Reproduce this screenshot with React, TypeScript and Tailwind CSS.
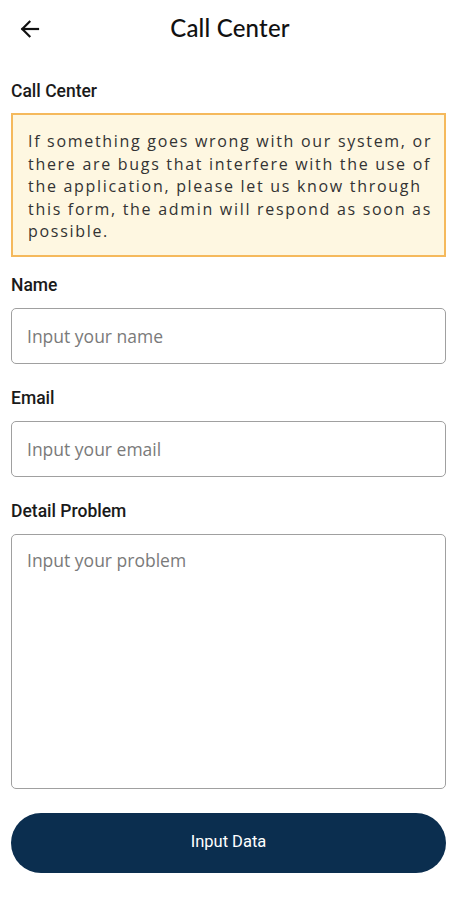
import React from "react";

export default function App() {
  return (
    <div className="w-[460px] min-h-[900px] bg-white">
      <div className="relative h-14 flex items-center justify-center">
        <button className="absolute left-[18px] top-[17px] w-6 h-6 flex items-center justify-center">
          <svg width="24" height="24" viewBox="0 0 24 24" fill="none" stroke="#111" strokeWidth="2.2" strokeLinecap="square">
            <path d="M20 12H4.5" />
            <path d="M11.5 4.8L4.3 12l7.2 7.2" />
          </svg>
        </button>
        <h1 className="text-[24px] font-[Lato,sans-serif] font-medium text-[#111] tracking-[0.2px]">Call Center</h1>
      </div>
      <div className="pl-[11px] pr-[14px] flex flex-col">
        <div className="mt-[25px] text-[17.5px] leading-[20px] font-medium text-[#1a1a1a] font-[Roboto,sans-serif]">Call Center</div>
        <div className="mt-[12px] border-2 border-[#f5b95c] bg-[#fef7e1] pl-[15px] pr-[6px] pt-[15px] pb-[12px] font-['Open_Sans',sans-serif] text-[16px] leading-[22.5px] tracking-[1.7px] text-[#333]">
          If something goes wrong with our system, or there are bugs that interfere with the use of the application, please let us know through this form, the admin will respond as soon as possible.
        </div>
        <div className="mt-[18px] text-[17.5px] leading-[20px] font-medium text-[#1a1a1a] font-[Roboto,sans-serif]">Name</div>
        <input
          placeholder="Input your name"
          className="mt-[13px] h-[56px] rounded-[5px] border border-[#a0a0a0] px-[15px] text-[17.5px] font-['Open_Sans',sans-serif] placeholder:text-[#7a7a7a] outline-none"
        />
        <div className="mt-[24px] text-[17.5px] leading-[20px] font-medium text-[#1a1a1a] font-[Roboto,sans-serif]">Email</div>
        <input
          placeholder="Input your email"
          className="mt-[13px] h-[56px] rounded-[5px] border border-[#a0a0a0] px-[15px] text-[17.5px] font-['Open_Sans',sans-serif] placeholder:text-[#7a7a7a] outline-none"
        />
        <div className="mt-[24px] text-[17.5px] leading-[20px] font-medium text-[#1a1a1a] font-[Roboto,sans-serif]">Detail Problem</div>
        <textarea
          placeholder="Input your problem"
          className="mt-[13px] h-[255px] resize-none rounded-[5px] border border-[#a0a0a0] px-[15px] pt-[12px] text-[17.5px] leading-[26px] font-['Open_Sans',sans-serif] placeholder:text-[#7a7a7a] outline-none"
        />
        <button className="mt-[24px] h-[60px] rounded-full bg-[#0b2e4f] text-white text-[16.5px] font-[Roboto,sans-serif]">
          Input Data
        </button>
      </div>
    </div>
  );
}
